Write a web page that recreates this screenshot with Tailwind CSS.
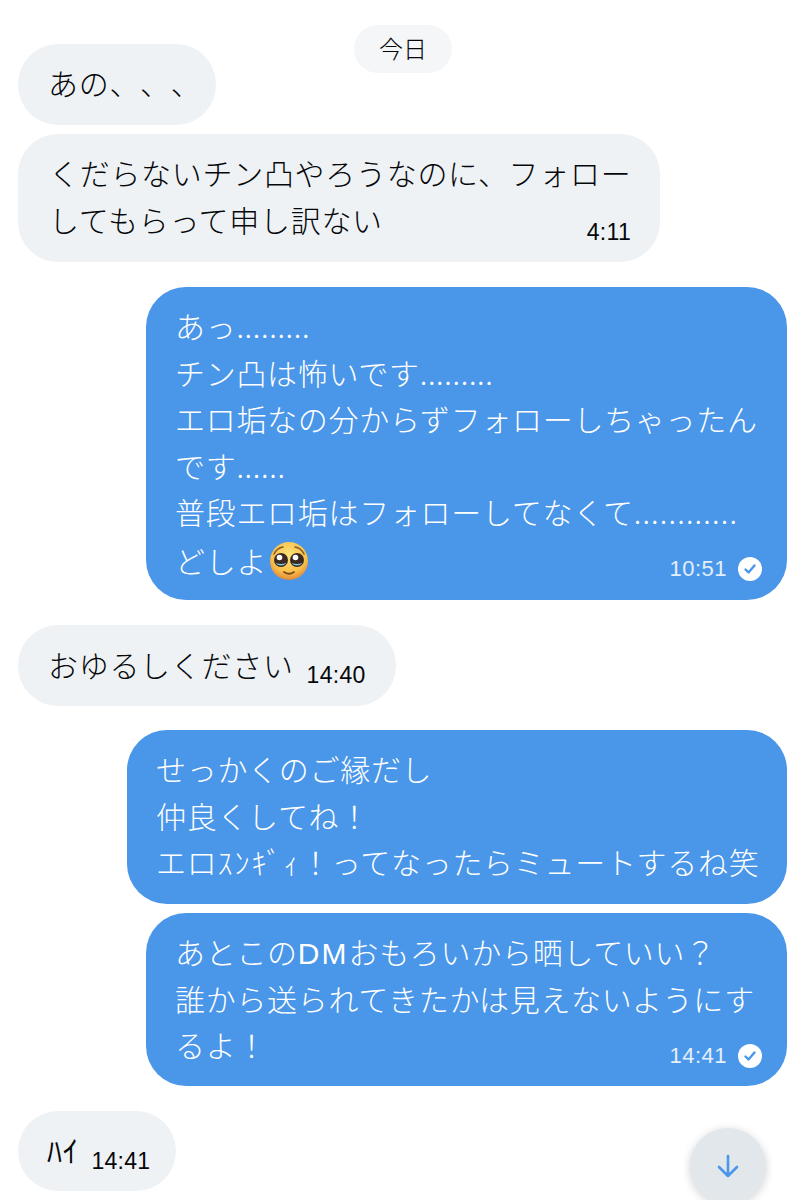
<!DOCTYPE html>
<html lang="ja">
<head>
    <meta charset="UTF-8">
    <meta name="viewport" content="width=device-width, initial-scale=1.0">
    <title>DM</title>
    <script src="https://cdn.jsdelivr.net/npm/@tailwindcss/browser@4"></script>
</head>
<body class="bg-white text-[#05070a] font-['Noto_Sans_CJK_JP','Noto_Sans',sans-serif]">
<div class="relative h-[1200px] w-[806px] overflow-hidden">

    <!-- DATE PILL -->
    <div class="absolute left-[354px] top-[25px] flex h-[48px] w-[98px] items-center justify-center rounded-[24px] bg-[#f5f6f7] pb-[3px] text-[24px] font-light">今日</div>

    <!-- MESSAGES -->
    <div class="flex flex-col px-[18px] pt-[44px] text-[30px] leading-[46.5px] font-light tracking-[0.7px] whitespace-nowrap [text-spacing-trim:space-all]">

        <div class="h-[81px] w-[198px] rounded-[40px] bg-[#eff2f4] pt-[15px] pl-[30px]">あの、、、</div>

        <div class="mt-[9px] h-[128px] w-[642px] rounded-[40px] bg-[#eff2f4] pt-[15px] pl-[31px] pr-[29px]">
            <div>くだらないチン凸やろうなのに、フォロー</div>
            <div class="flex items-end justify-between">
                <span>してもらって申し訳ない</span>
                <span class="mb-[-8px] font-['Liberation_Sans'] text-[23px] leading-[36px] font-normal tracking-[0.3px]">4:11</span>
            </div>
        </div>

        <div class="mt-[25px] ml-[128px] h-[313px] w-[641px] rounded-[40px] bg-[#4a96e8] pt-[15px] pl-[29px] pr-[25px] text-white">
            <div>あっ.........</div>
            <div>チン凸は怖いです.........</div>
            <div>エロ垢なの分からずフォローしちゃったん</div>
            <div>です......</div>
            <div>普段エロ垢はフォローしてなくて<span class="tracking-[1.2px]">............</span></div>
            <div class="flex items-center justify-between">
                <span class="flex items-center">どしよ
                    <svg class="ml-[3px]" width="38" height="38" viewBox="0 0 38 38">
                        <defs><radialGradient id="face" cx="50%" cy="35%" r="65%"><stop offset="0%" stop-color="#fde27a"/><stop offset="70%" stop-color="#f8c04a"/><stop offset="100%" stop-color="#e2893a"/></radialGradient></defs>
                        <circle cx="19" cy="19" r="19" fill="url(#face)"/>
                        <path d="M4 12q3-6 9-7M34 12q-3-6-9-7" stroke="#8a5a20" stroke-width="1.600" fill="none" stroke-linecap="round"/>
                        <circle cx="11" cy="18" r="7" fill="#3b2a20"/>
                        <circle cx="27" cy="18" r="7" fill="#3b2a20"/>
                        <circle cx="9.500" cy="15.500" r="2.800" fill="#fff"/>
                        <circle cx="25.500" cy="15.500" r="2.800" fill="#fff"/>
                        <path d="M5.500 21a6 4 0 0 0 11 0q-5.500 2-11 0z" fill="#7fd0ee"/>
                        <path d="M21.500 21a6 4 0 0 0 11 0q-5.500 2-11 0z" fill="#7fd0ee"/>
                        <path d="M14 30q5 3.500 10 0" stroke="#7a4a1c" stroke-width="1.800" fill="none" stroke-linecap="round"/>
                    </svg>
                </span>
                <span class="mt-[16px] flex items-center gap-[11px] font-['Liberation_Sans'] text-[22px] leading-[36px] font-normal tracking-[0.5px] text-white/85">10:51
                    <svg width="24" height="24" viewBox="0 0 24 24"><circle cx="12" cy="12" r="12" fill="#fff"/><path d="M7.500 12.500l3 3 6-7" stroke="#4a96e8" stroke-width="2.400" fill="none" stroke-linecap="round" stroke-linejoin="round"/></svg>
                </span>
            </div>
        </div>

        <div class="mt-[25px] flex h-[81px] w-[378px] items-end gap-[13px] rounded-[40px] bg-[#eff2f4] pt-[15px] pb-[19px] pl-[30px]">
            <span>おゆるしください</span>
            <span class="mb-[-6px] font-['Liberation_Sans'] text-[23px] leading-[36px] font-normal tracking-[0.3px]">14:40</span>
        </div>

        <div class="mt-[24px] ml-[109px] h-[174px] w-[660px] rounded-[40px] bg-[#4a96e8] pt-[15px] pl-[29px] text-white">
            <div>せっかくのご縁だし</div>
            <div>仲良くしてね！</div>
            <div>エロ<span class="tracking-[2px]">ｽﾝｷﾞｨ</span>！ってなったらミュートするね笑</div>
        </div>

        <div class="mt-[9px] ml-[128px] h-[173px] w-[641px] rounded-[40px] bg-[#4a96e8] pt-[15px] pl-[29px] pr-[25px] text-white">
            <div>あとこの<span class="font-['Liberation_Sans'] leading-none tracking-[2px]">DM</span>おもろいから晒していい？</div>
            <div>誰から送られてきたかは見えないようにす</div>
            <div class="flex items-end justify-between">
                <span>るよ！</span>
                <span class="mb-[-6px] flex items-center gap-[11px] font-['Liberation_Sans'] text-[22px] leading-[36px] font-normal tracking-[0.5px] text-white/85">14:41
                    <svg width="24" height="24" viewBox="0 0 24 24"><circle cx="12" cy="12" r="12" fill="#fff"/><path d="M7.500 12.500l3 3 6-7" stroke="#4a96e8" stroke-width="2.400" fill="none" stroke-linecap="round" stroke-linejoin="round"/></svg>
                </span>
            </div>
        </div>

        <div class="mt-[25px] flex h-[80px] w-[158px] items-end gap-[13px] rounded-[40px] bg-[#eff2f4] pt-[15px] pb-[19px] pl-[29px]">
            <span class="font-normal">ﾊｲ</span>
            <span class="mb-[-7px] font-['Liberation_Sans'] text-[23px] leading-[36px] font-normal tracking-[0.3px]">14:41</span>
        </div>
    </div>

    <!-- SCROLL DOWN BUTTON -->
    <div class="absolute left-[690px] top-[1128px] flex h-[76px] w-[76px] items-center justify-center rounded-full bg-[#e2e7eb] shadow-[0_2px_10px_rgba(0,0,0,0.18)]">
        <svg width="26" height="26" viewBox="0 0 26 26" fill="none" stroke="#4a96e8" stroke-width="2.600" stroke-linecap="round" stroke-linejoin="round"><path d="M13 3v20M4 14l9 9 9-9"/></svg>
    </div>
</div>
</body>
</html>
